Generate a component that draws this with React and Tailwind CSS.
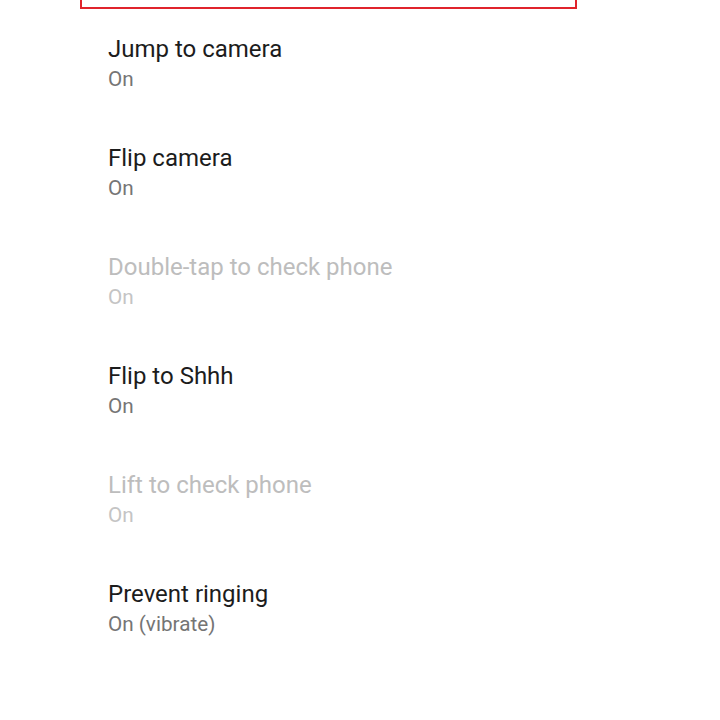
export default function App() {
  const items = [
    { t: "Jump to camera", s: "On", d: false },
    { t: "Flip camera", s: "On", d: false },
    { t: "Double-tap to check phone", s: "On", d: true },
    { t: "Flip to Shhh", s: "On", d: false },
    { t: "Lift to check phone", s: "On", d: true },
    { t: "Prevent ringing", s: "On (vibrate)", d: false },
  ];
  return (
    <div className="w-[720px] h-[720px] bg-white overflow-hidden" style={{ fontFamily: "Roboto, sans-serif" }}>
      <div className="ml-[80px] w-[497px] h-[9px] border-[2.5px] border-t-0 border-[#e0242c]" />
      <div className="flex flex-col gap-[52px] pt-[25px] pl-[108px]">
        {items.map((it) => (
          <div key={it.t} className="flex flex-col">
            <div className={`text-[24px] leading-[30px] ${it.d ? "text-[#bdbdbd]" : "text-[#1c1c1c]"}`}>{it.t}</div>
            <div className={`mt-[3px] text-[20.7px] leading-[24px] ${it.d ? "text-[#c4c4c4]" : "text-[#757575]"}`}>{it.s}</div>
          </div>
        ))}
      </div>
    </div>
  );
}
